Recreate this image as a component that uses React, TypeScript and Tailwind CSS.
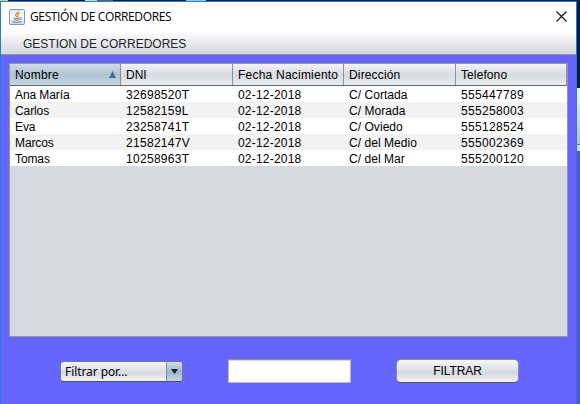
const columns = [
  { label: "Nombre", size: "w-[111px]", tracking: "tracking-[0.2px]" },
  { label: "DNI", size: "w-[112px]", tracking: "tracking-[0px]" },
  { label: "Fecha Nacimiento", size: "w-[111px]", tracking: "tracking-[0.22px]" },
  { label: "Dirección", size: "w-[112px]", tracking: "tracking-[0.15px]" },
  { label: "Telefono", size: "w-[111px]", tracking: "tracking-[0.1px]" },
];

const cellTracking = [
  "tracking-[-0.1px]",
  "tracking-[0.3px]",
  "tracking-[0.2px]",
  "tracking-[0.05px]",
  "tracking-[0.33px]",
];

const rows = [
  ["Ana María", "32698520T", "02-12-2018", "C/ Cortada", "555447789"],
  ["Carlos", "12582159L", "02-12-2018", "C/ Morada", "555258003"],
  ["Eva", "23258741T", "02-12-2018", "C/ Oviedo", "555128524"],
  ["Marcos", "21582147V", "02-12-2018", "C/ del Medio", "555002369"],
  ["Tomas", "10258963T", "02-12-2018", "C/ del Mar", "555200120"],
];

function JavaIcon() {
  return (
    <svg width="16" height="16" viewBox="0 0 16 16" fill="none">
      <defs>
        <linearGradient id="tile" x1="0" y1="0" x2="0" y2="1">
          <stop offset="0" stopColor="#dfe8f0" />
          <stop offset="0.5" stopColor="#fff" />
          <stop offset="1" stopColor="#c9d5df" />
        </linearGradient>
      </defs>
      <rect x="0.5" y="0.5" width="15" height="15" rx="1" fill="url(#tile)" stroke="#7f9ab2" />
      <path d="M9.6 2.2C10 4 6.2 4.6 6.6 6.3c.2.8 1 1.1 1 1.9M10.6 4.3C8.4 5.2 8.2 6 8.8 6.8c.4.6.1 1.1-.5 1.6" stroke="#e8792b" strokeWidth="1.1" />
      <path d="M4.6 8.8c-1 .8 5.6.8 6.4 0M5 10.6c1.5.6 4 .6 5.6 0M11.2 8.4c2.3-.2 1.7 2-.4 2.3M3.5 12.3c-.6 1.3 8.7 1.2 9.3-.1" stroke="#55789a" strokeWidth="0.95" />
    </svg>
  );
}

function Titlebar() {
  return (
    <header className="flex h-[31px] items-center bg-white pl-[8px] pr-[9px] pb-[2px]">
      <JavaIcon />
      <h1 className="ml-[5px] flex-1 font-['Open_Sans','Noto_Sans',sans-serif] text-[12px] leading-[16px] tracking-[-0.37px] text-black">
        GESTIÓN DE CORREDORES
      </h1>
      <button aria-label="Cerrar">
        <svg width="11" height="11" viewBox="0 0 11 11" stroke="#111" strokeWidth="1.1">
          <path d="M.5.5l10 10M10.5.5l-10 10" />
        </svg>
      </button>
    </header>
  );
}

function RunnersTable() {
  return (
    <div className="flex h-[274px] w-[559px] flex-col border border-[#9297a1] bg-[#d6d9df]">
      <div className="flex h-[22px] border-b border-[#626975] bg-linear-to-b from-[#f3f4f6] via-[#d8dbe1] via-50% to-[#e9ebef]">
        {columns.map((column, i) => (
          <div
            key={column.label}
            className={`flex shrink-0 items-center justify-between whitespace-nowrap border-r border-[#8d929b] pl-[5px] pr-[4px] ${column.size} ${column.tracking} ${i === 0 ? "bg-linear-to-b from-[#d0dbe5] via-[#b1c4d3] via-50% to-[#c5d5e1]" : ""}`}
          >
            {column.label}
            {i === 0 && (
              <svg width="7" height="7" viewBox="0 0 7 7">
                <path d="M3.5 0L7 7H0Z" fill="#426f99" />
              </svg>
            )}
          </div>
        ))}
      </div>
      {rows.map((row, r) => (
        <div key={row[0]} className={`flex h-[16px] items-center ${r % 2 ? "bg-[#f2f2f2]" : "bg-white"}`}>
          {row.map((value, i) => (
            <div key={i} className={`shrink-0 whitespace-nowrap pl-[5px] pt-[2px] leading-[16px] ${columns[i].size} ${cellTracking[i]}`}>
              {value}
            </div>
          ))}
        </div>
      ))}
    </div>
  );
}

function Filters() {
  return (
    <div className="mt-[22px] flex items-center pl-[51px]">
      <button className="flex h-[21px] w-[123px] overflow-hidden rounded-[4px] border border-[#747b88] border-b-[#4c525d] bg-linear-to-b from-[#f5f6f8] via-[#d7dae0] via-60% to-[#f5f6f9]">
        <span className="flex-1 pl-[4px] text-left font-['Noto_Sans',sans-serif] text-[12px] leading-[19px] tracking-[-0.08px]">
          Filtrar por...
        </span>
        <span className="flex h-full w-[16px] items-center justify-center border-l border-[#718ca2] bg-linear-to-b from-[#d0dde7] via-[#9eb7ca] via-55% to-[#c3d7e5]">
          <svg width="7" height="5" viewBox="0 0 7 5">
            <path d="M0 0h7L3.5 5Z" fill="#1c1f23" />
          </svg>
        </span>
      </button>
      <input
        aria-label="Filtro"
        className="ml-[45px] h-[24px] w-[123px] border border-[#b7b7bb] border-t-[#8d8e93] bg-white shadow-[inset_0_1px_0_#d5d6d9]"
      />
      <button className="ml-[45px] h-[24px] w-[123px] rounded-[5px] border border-[#888d98] border-b-[#4c525d] bg-linear-to-b from-[#f7f8fa] via-[#d5d8df] via-60% to-[#f5f6f9] pt-[1px] text-[12px] leading-[21px] tracking-[-0.1px]">
        FILTRAR
      </button>
    </div>
  );
}

export default function App() {
  return (
    <div className="flex h-[404px] w-[580px] flex-col overflow-hidden bg-[#001b3a] font-['Liberation_Sans',Arial,sans-serif] text-[12px] text-black">
      <div className="flex h-px shrink-0">
        <div className="w-[8px] bg-[#dcc982]" />
        <div className="w-[77px] bg-[#06162c]" />
        <div className="w-[12px] bg-[#dedb82]" />
        <div className="w-[16px] bg-[#6b6254]" />
        <div className="w-[73px] bg-[#06162c]" />
        <div className="w-[20px] bg-[#b5c2cb]" />
      </div>
      <div className="flex min-h-0 flex-1">
        <main className="flex w-[577px] flex-col border-x border-t border-[#1883d7] bg-[#6666ff]">
          <Titlebar />
          <nav className="h-[22px] border-b border-[#92959e] bg-linear-to-b from-[#fbfbfc] to-[#d4d7dd] pl-[22px] leading-[22px] tracking-[0px] text-[#22252b]">
            GESTION DE CORREDORES
          </nav>
          <div className="pl-[8px] pt-[8px]">
            <RunnersTable />
            <Filters />
          </div>
        </main>
        <aside className="flex flex-1 flex-col">
          <div className="h-[87px] bg-[#001b3a]" />
          <div className="h-[56px] bg-linear-to-b from-[#f2f2f2] to-[#bdbdc0]" />
          <div className="h-[7px] border-t border-[#77797f] bg-[#d0d2d6]" />
          <div className="flex-1 bg-[#5b52d2]" />
        </aside>
      </div>
    </div>
  );
}
